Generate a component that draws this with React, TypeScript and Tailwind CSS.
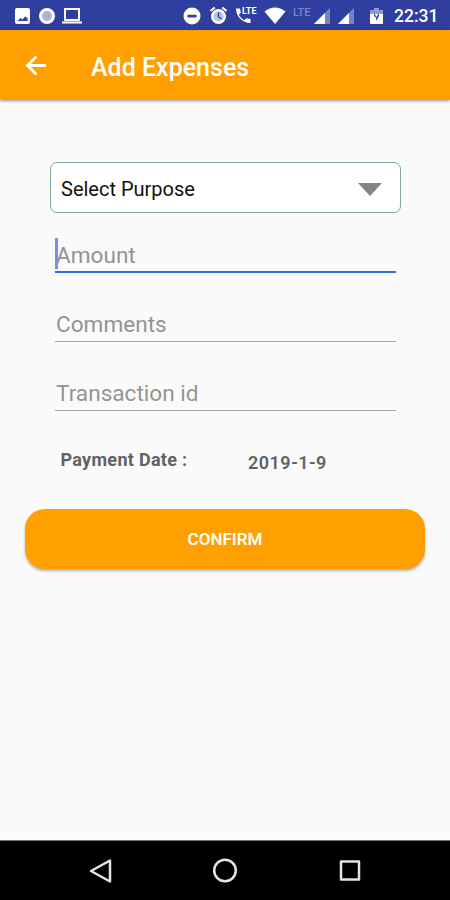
import type { ReactNode } from "react";

export default function App() {
  return (
    <div className="flex h-[900px] w-[450px] flex-col overflow-hidden bg-[#fafafa] font-['Roboto',sans-serif]">
      <StatusBar />
      <AppBar title="Add Expenses" />
      <main className="flex flex-1 flex-col border-b border-white pt-[62px]">
        <button className="mx-[50px] flex h-[51px] w-[351px] items-center justify-between rounded-[7px] border-[1.5px] border-[#80ab9b] bg-white pr-[18px] pl-[10px] text-[20px] text-[#111]">
          <span className="pt-[2px] whitespace-nowrap">Select Purpose</span>
          <svg viewBox="0 0 24 13" className="mt-[3px] h-[13px] w-6" aria-hidden="true">
            <path d="M0 0h24L12 13z" fill="#858585" />
          </svg>
        </button>

        <div className="mr-[54px] ml-[55px] flex flex-col">
          <Field label="Amount" focused />
          <Field label="Comments" className="h-[69px]" />
          <Field label="Transaction id" className="h-[69px]" />
        </div>

        <div className="mt-[36px] flex h-[30px] items-start pl-[60.5px] text-[18px] leading-[26px] font-bold text-[#626262]">
          <span className="w-[187.5px] tracking-[0.3px] whitespace-nowrap">Payment Date :</span>
          <span className="pt-[3px] font-semibold tracking-[0.5px]">2019-1-9</span>
        </div>

        <button className="mx-[25px] mt-[32px] h-[60px] rounded-[20px] bg-[#ffa000] pt-0.5 text-[17px] font-semibold text-white shadow-[0_2px_3px_rgba(0,0,0,0.3)]">
          CONFIRM
        </button>
      </main>
      <NavigationBar />
    </div>
  );
}

function Field({
  label,
  focused = false,
  className = "h-[60px]",
}: {
  label: string;
  focused?: boolean;
  className?: string;
}) {
  return (
    <div
      className={`relative flex items-end ${className} ${
        focused ? "border-b-2 border-[#2f6be0] pb-px" : "border-b border-[#a6a6a6] pb-[2px]"
      }`}
    >
      {focused && <span className="absolute bottom-0.5 left-0 h-[31px] w-[3px] bg-[#6f93f0]" />}
      <span className="pl-px text-[22.6px] leading-[28px] whitespace-nowrap text-[#949494]">
        {label}
      </span>
    </div>
  );
}

function AppBar({ title }: { title: string }) {
  return (
    <header className="z-10 flex h-[70px] shrink-0 items-center bg-[#ffa000] pl-[25px] text-white shadow-[0_1px_3px_rgba(0,0,0,0.4)]">
      <svg
        viewBox="0 0 22 22"
        className="h-[22px] w-[22px]"
        fill="none"
        stroke="currentColor"
        strokeWidth="2.8"
        aria-hidden="true"
      >
        <path d="M21 11.5H3M11.5 2.5l-9 9 9 9" />
      </svg>
      <h1 className="pt-[5px] pl-[44px] text-[25px] leading-[30px] font-medium">{title}</h1>
    </header>
  );
}

function StatusBar() {
  return (
    <div className="flex h-[30px] shrink-0 items-center bg-[#303f9f] pt-px text-white">
      <StatusIcon className="ml-[14px] h-[18px] w-[17px]" viewBox="0 0 17 18">
        <path
          fillRule="evenodd"
          d="M3 1h11a2 2 0 012 2v12a2 2 0 01-2 2H3a2 2 0 01-2-2V3a2 2 0 012-2zM3.5 14h10V11l-2.5-1.5-2.5 3-2-1.5z"
        />
      </StatusIcon>
      <StatusIcon className="ml-[7px] h-[18px] w-[18px]" viewBox="0 0 18 18">
        <circle cx="9" cy="9" r="6.5" fill="#a9b0da" stroke="currentColor" strokeWidth="3" />
      </StatusIcon>
      <StatusIcon className="ml-[6px] h-[18px] w-5" viewBox="0 0 20 18">
        <path d="M3 2h14v11H3z" fill="none" stroke="currentColor" strokeWidth="2" />
        <path d="M0 14.5h20v2H0z" />
      </StatusIcon>

      <StatusIcon className="ml-[101px] h-[18px] w-[18px]" viewBox="0 0 18 18">
        <path fillRule="evenodd" d="M9 .5a8.5 8.5 0 100 17 8.5 8.5 0 000-17zM4.5 7.8h9v2.6h-9z" />
      </StatusIcon>
      <StatusIcon className="ml-[8px] h-[19px] w-[19px]" viewBox="0 0 19 19">
        <circle cx="9.5" cy="10.5" r="6.3" fill="#bcc3e5" stroke="currentColor" strokeWidth="2.4" />
        <path
          d="M1.5 5l4.2-3.5M17.5 5l-4.2-3.5"
          fill="none"
          stroke="currentColor"
          strokeWidth="2.2"
        />
        <path d="M9.5 6.5v4.5l3 2" fill="none" stroke="#303f9f" strokeWidth="1.4" />
      </StatusIcon>
      <span className="relative ml-[7px] flex h-[18px] w-[23px] items-center">
        <StatusIcon className="h-[17px] w-[17px]" viewBox="0 0 17 17">
          <path d="M1 1.5h4l.8 4.3-2 2a13 13 0 005.4 5.4l2-2 4.3.8v4C7.5 16 1 9.5 1 1.5z" />
        </StatusIcon>
        <span className="absolute top-0 left-[7px] text-[9px] leading-[9px] font-bold">LTE</span>
      </span>
      <StatusIcon className="ml-[6px] h-[17px] w-[22px]" viewBox="0 0 22 17">
        <path d="M11 17L.5 4.500Q11-3.500 21.500 4.500z" />
      </StatusIcon>
      <span className="-mt-[6px] ml-[7px] w-5 text-[11px] leading-[11px] font-medium text-[#7c86c5]">
        LTE
      </span>
      <Signal className="ml-px h-4 w-4" />
      <Signal className="ml-[8px] h-4 w-4" />
      <StatusIcon className="ml-[16px] h-[18px] w-[13px]" viewBox="0 0 13 18">
        <path d="M4 1h5v2h4v4H0V3h4z" fill="#939bd0" />
        <path d="M0 7h13v9a1 1 0 01-1 1H1a1 1 0 01-1-1z" />
        <path d="M4 6l2.5 4L9 6v3l-3 5v-3.5L4 9z" fill="#303f9f" />
      </StatusIcon>
      <span className="ml-[11px] pt-px text-[17.5px] leading-[20px] font-medium">22:31</span>
    </div>
  );
}

function StatusIcon({
  className,
  viewBox,
  children,
}: {
  className: string;
  viewBox: string;
  children: ReactNode;
}) {
  return (
    <svg className={`shrink-0 ${className}`} viewBox={viewBox} fill="currentColor" aria-hidden="true">
      {children}
    </svg>
  );
}

function Signal({ className }: { className: string }) {
  return (
    <StatusIcon className={className} viewBox="0 0 16 16">
      <path d="M16 0v16H0z" fill="#7883c3" />
      <path d="M11 5v11H0z" />
    </StatusIcon>
  );
}

function NavigationBar() {
  return (
    <nav className="flex h-[60px] shrink-0 items-center justify-between border-t border-[#777] bg-black px-[87px] text-[#e4e4e4]">
      <NavIcon>
        <path d="M23 2.5v21L4 13z" />
      </NavIcon>
      <NavIcon>
        <circle cx="13" cy="12.5" r="10.8" />
      </NavIcon>
      <NavIcon>
        <path d="M4 3.5h18v18H4z" />
      </NavIcon>
    </nav>
  );
}

function NavIcon({ children }: { children: ReactNode }) {
  return (
    <svg
      viewBox="0 0 26 26"
      className="h-[26px] w-[26px]"
      fill="none"
      stroke="currentColor"
      strokeWidth="2.5"
      strokeLinejoin="round"
      aria-hidden="true"
    >
      {children}
    </svg>
  );
}
